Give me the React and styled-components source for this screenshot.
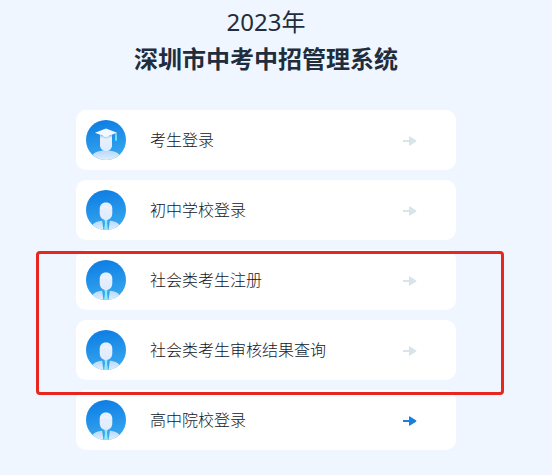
/* eslint-disable react/prop-types */
import styled, { createGlobalStyle, ThemeProvider } from "styled-components"

const theme = {
    colors: {
        page: "#eff6ff",
        card: "#ffffff",
        title: "#1f2d3d",
        text: "#0f1728",
        arrow: "#d8e3ea",
        active: "#1a80dc",
        mark: "#e6261f",
    },
}

const AvatarIcon = ({ id, graduate }) => (
    <svg width="40" height="40" viewBox="0 0 40 40" aria-hidden="true">
        <defs>
            <linearGradient id={`${id}-bg`} x1="0" y1="0" x2="0.2" y2="1">
                <stop offset="0" stopColor="#0a7ae4" />
                <stop offset="1" stopColor="#36a6ee" />
            </linearGradient>
            <linearGradient id={`${id}-body`} x1="0" y1="0" x2="0" y2="1">
                <stop offset="0" stopColor="#b4d9fb" />
                <stop offset="1" stopColor="#dfeefd" />
            </linearGradient>
            <linearGradient id={`${id}-face`} x1="0" y1="0" x2="0" y2="1">
                <stop offset="0" stopColor="#e8f1fe" />
                <stop offset="1" stopColor="#dfebfd" />
            </linearGradient>
            <clipPath id={`${id}-clip`}>
                <circle cx="20" cy="20" r="20" />
            </clipPath>
        </defs>
        <g clipPath={`url(#${id}-clip)`}>
            <rect width="40" height="40" fill={`url(#${id}-bg)`} />
            <path
                d="M5 40 C5 34 9 32 14 31 C18 30 22 30 26 31 C31 32 35 34 35 40 Z"
                fill={`url(#${id}-body)`}
            />
            {graduate ? (
                <>
                    <path d="M14 16 H26 V25 C26 29 23 31 20 31 C17 31 14 29 14 25 Z" fill={`url(#${id}-face)`} />
                    <path d="M14 15 L20 17 L26 15 V17 L20 18.500 L14 17 Z" fill="#b9d8f9" />
                    <path d="M20 8.500 L31 12.700 L20 17 L9 12.700 Z" fill="#f3f8ff" />
                    <path d="M30 13 V16" stroke="#d4ecff" strokeWidth="1" />
                    <rect x="29" y="15" width="2" height="6" rx="1" fill="#5fe6f7" />
                </>
            ) : (
                <>
                    <path d="M16 30 H24 L22.500 40 H17.500 Z" fill="#3ba3ee" />
                    <path d="M18.500 30 H21.500 L21 33 L22 40 H18 L19 33 Z" fill="#8deaf8" />
                    <path d="M20 12.500 C24 12.500 26.300 15 26.300 19 V23 C26.300 27.500 23.500 30 20 30 C16.500 30 13.700 27.500 13.700 23 V19 C13.700 15 16 12.500 20 12.500 Z" fill={`url(#${id}-face)`} />
                    <path d="M14.500 18 C17 19 19 17 20 16 C21 18 24 19 25.500 18" fill="none" stroke="#f3f8ff" strokeWidth="1" />
                </>
            )}
        </g>
    </svg>
)

const ArrowIcon = () => (
    <svg width="14" height="10" viewBox="0 0 14 10" aria-hidden="true">
        <path d="M0 4 H6 V1 Q6 0 7 0.500 L13 4.300 Q14 5 13 5.700 L7 9.500 Q6 10 6 9 V6 H0 Z" fill="currentColor" />
    </svg>
)

const Entry = ({ id, label, graduate, active }) => (
    <li>
        <EntryLink href={`#${id}`}>
            <AvatarIcon id={id} graduate={graduate} />
            <EntryLabel>{label}</EntryLabel>
            <EntryArrow $active={active}>
                <ArrowIcon />
            </EntryArrow>
        </EntryLink>
    </li>
)

const App = () => {
    return (
        <ThemeProvider theme={theme}>
            <GlobalStyle />
            <Page>
                <Heading>
                    <Year>2023年</Year>
                    <SystemName>深圳市中考中招管理系统</SystemName>
                </Heading>
                <Menu>
                    <EntryList>
                        <Entry id="student" label="考生登录" graduate />
                        <Entry id="middle" label="初中学校登录" />
                    </EntryList>
                    <MarkedList>
                        <Entry id="register" label="社会类考生注册" />
                        <Entry id="query" label="社会类考生审核结果查询" />
                    </MarkedList>
                    <EntryList>
                        <Entry id="high" label="高中院校登录" active />
                    </EntryList>
                </Menu>
            </Page>
        </ThemeProvider>
    )
}

export default App

const GlobalStyle = createGlobalStyle`
    * {
        box-sizing: border-box;
    }

    body {
        margin: 0;
        background: ${(props) => props.theme.colors.page};
        font-family: "Noto Sans", "Noto Sans CJK SC", sans-serif;
    }
`

const Page = styled.main`
    display: flex;
    flex-direction: column;
    align-items: center;
    gap: 33px;
    padding: 3px 20px 24px 0;
`

const Heading = styled.h1`
    display: flex;
    flex-direction: column;
    align-items: center;
    margin: 0;
    color: ${(props) => props.theme.colors.title};
    font-size: 24px;
    line-height: 37px;
`

const Year = styled.span`
    font-weight: 400;
`

const SystemName = styled.span`
    font-weight: 700;
`

const Menu = styled.nav`
    display: flex;
    flex-direction: column;
    gap: 10px;
    width: 100%;
    max-width: 380px;
`

const EntryList = styled.ul`
    display: flex;
    flex-direction: column;
    gap: 10px;
    margin: 0;
    padding: 0;
    list-style: none;
`

const MarkedList = styled(EntryList)`
    position: relative;

    /* red frame lying over the two entries */
    &::after {
        content: "";
        position: absolute;
        inset: 1px -48px -15px -40px;
        border: 3px solid ${(props) => props.theme.colors.mark};
        border-radius: 4px;
        pointer-events: none;
        z-index: 1;
    }
`

const EntryLink = styled.a`
    display: flex;
    align-items: center;
    gap: 24px;
    height: 60px;
    padding: 0 39px 0 10px;
    border-radius: 10px;
    background: ${(props) => props.theme.colors.card};
    color: ${(props) => props.theme.colors.text};
    text-decoration: none;
`

const EntryLabel = styled.span`
    flex: 1;
    font-size: 16px;
    font-weight: 300;
    line-height: 24px;
`

const EntryArrow = styled.span`
    display: flex;
    padding-top: 2px;
    color: ${(props) => (props.$active ? props.theme.colors.active : props.theme.colors.arrow)};
`
